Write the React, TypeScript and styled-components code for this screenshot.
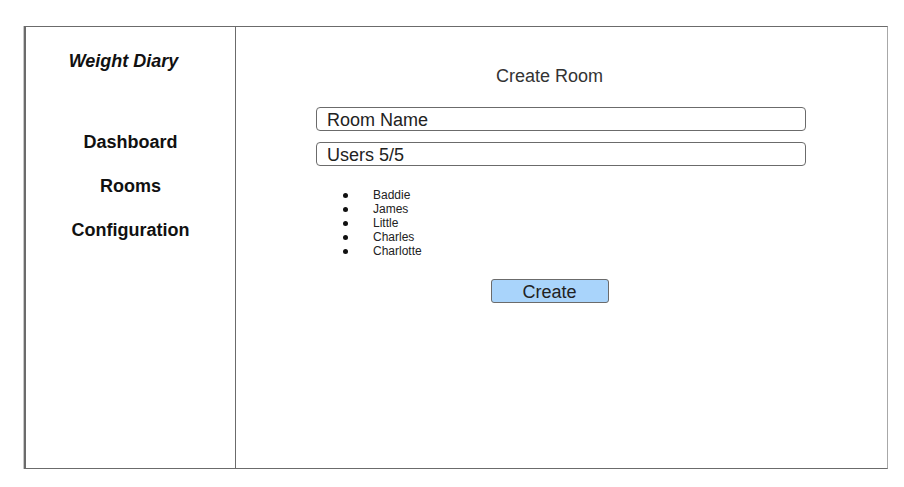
import React from 'react';
import styled, { createGlobalStyle } from 'styled-components';

const GlobalStyle = createGlobalStyle`
  html, body {
    margin: 0;
    padding: 0;
    background: #ffffff;
    font-family: "Liberation Sans", Arial, sans-serif;
  }
`;

const Page = styled.div`
  padding: 26px 0 0 24px;
`;

const Frame = styled.div`
  width: 861px;
  height: 441px;
  display: flex;
  border: 1px solid #6b6b6b;
  border-left: 2px solid #6b6b6b;
  border-right-color: #a8a8a8;
  box-shadow: -1px 0 0 #c8c8c8;
`;

const Sidebar = styled.nav`
  width: 209px;
  flex-shrink: 0;
  border-right: 1px solid #6b6b6b;
  display: flex;
  flex-direction: column;
  align-items: center;
  padding-top: 24px;
`;

const Brand = styled.div`
  font-size: 18px;
  line-height: 20px;
  font-weight: bold;
  font-style: italic;
  color: #111;
  margin-left: -14px;
  margin-bottom: 61px;
`;

const NavList = styled.div`
  display: flex;
  flex-direction: column;
  align-items: center;
  gap: 24px;
`;

const NavItem = styled.a`
  font-size: 18px;
  line-height: 20px;
  font-weight: bold;
  color: #111;
  text-decoration: none;
`;

const Main = styled.main`
  flex: 1;
  display: flex;
  flex-direction: column;
  padding: 39px 24px 0 0;
`;

const Title = styled.h1`
  margin: 0 0 21px;
  text-align: center;
  font-size: 18px;
  line-height: 20px;
  font-weight: normal;
  color: #333;
`;

const Field = styled.div`
  margin-left: 80px;
  width: 490px;
  height: 24px;
  box-sizing: border-box;
  border: 1px solid #6b6b6b;
  border-radius: 4px;
  padding: 1px 0 0 10px;
  font-size: 18px;
  line-height: 22px;
  color: #222;
  & + & {
    margin-top: 11px;
  }
`;

const Users = styled.ul`
  list-style: none;
  margin: 22px 0 0 107px;
  padding: 0;
`;

const User = styled.li`
  display: flex;
  align-items: center;
  font-size: 12px;
  line-height: 14px;
  color: #222;
  &::before {
    content: '';
    width: 5px;
    height: 5px;
    border-radius: 50%;
    background: #111;
    margin-right: 25px;
  }
`;

const Actions = styled.div`
  display: flex;
  justify-content: center;
  margin-top: 21px;
`;

const CreateButton = styled.button`
  width: 118px;
  height: 24px;
  padding: 1px 0 0;
  background: #a9d4fb;
  border: 1px solid #6b6b6b;
  border-radius: 3px;
  font-family: "Liberation Sans", Arial, sans-serif;
  font-size: 18px;
  line-height: 20px;
  color: #222;
`;

const users = ['Baddie', 'James', 'Little', 'Charles', 'Charlotte'];

export default function App() {
  return (
    <Page>
      <GlobalStyle />
      <Frame>
        <Sidebar>
          <Brand>Weight Diary</Brand>
          <NavList>
            <NavItem>Dashboard</NavItem>
            <NavItem>Rooms</NavItem>
            <NavItem>Configuration</NavItem>
          </NavList>
        </Sidebar>
        <Main>
          <Title>Create Room</Title>
          <Field>Room Name</Field>
          <Field>Users 5/5</Field>
          <Users>
            {users.map(u => (
              <User key={u}>{u}</User>
            ))}
          </Users>
          <Actions>
            <CreateButton>Create</CreateButton>
          </Actions>
        </Main>
      </Frame>
    </Page>
  );
}
